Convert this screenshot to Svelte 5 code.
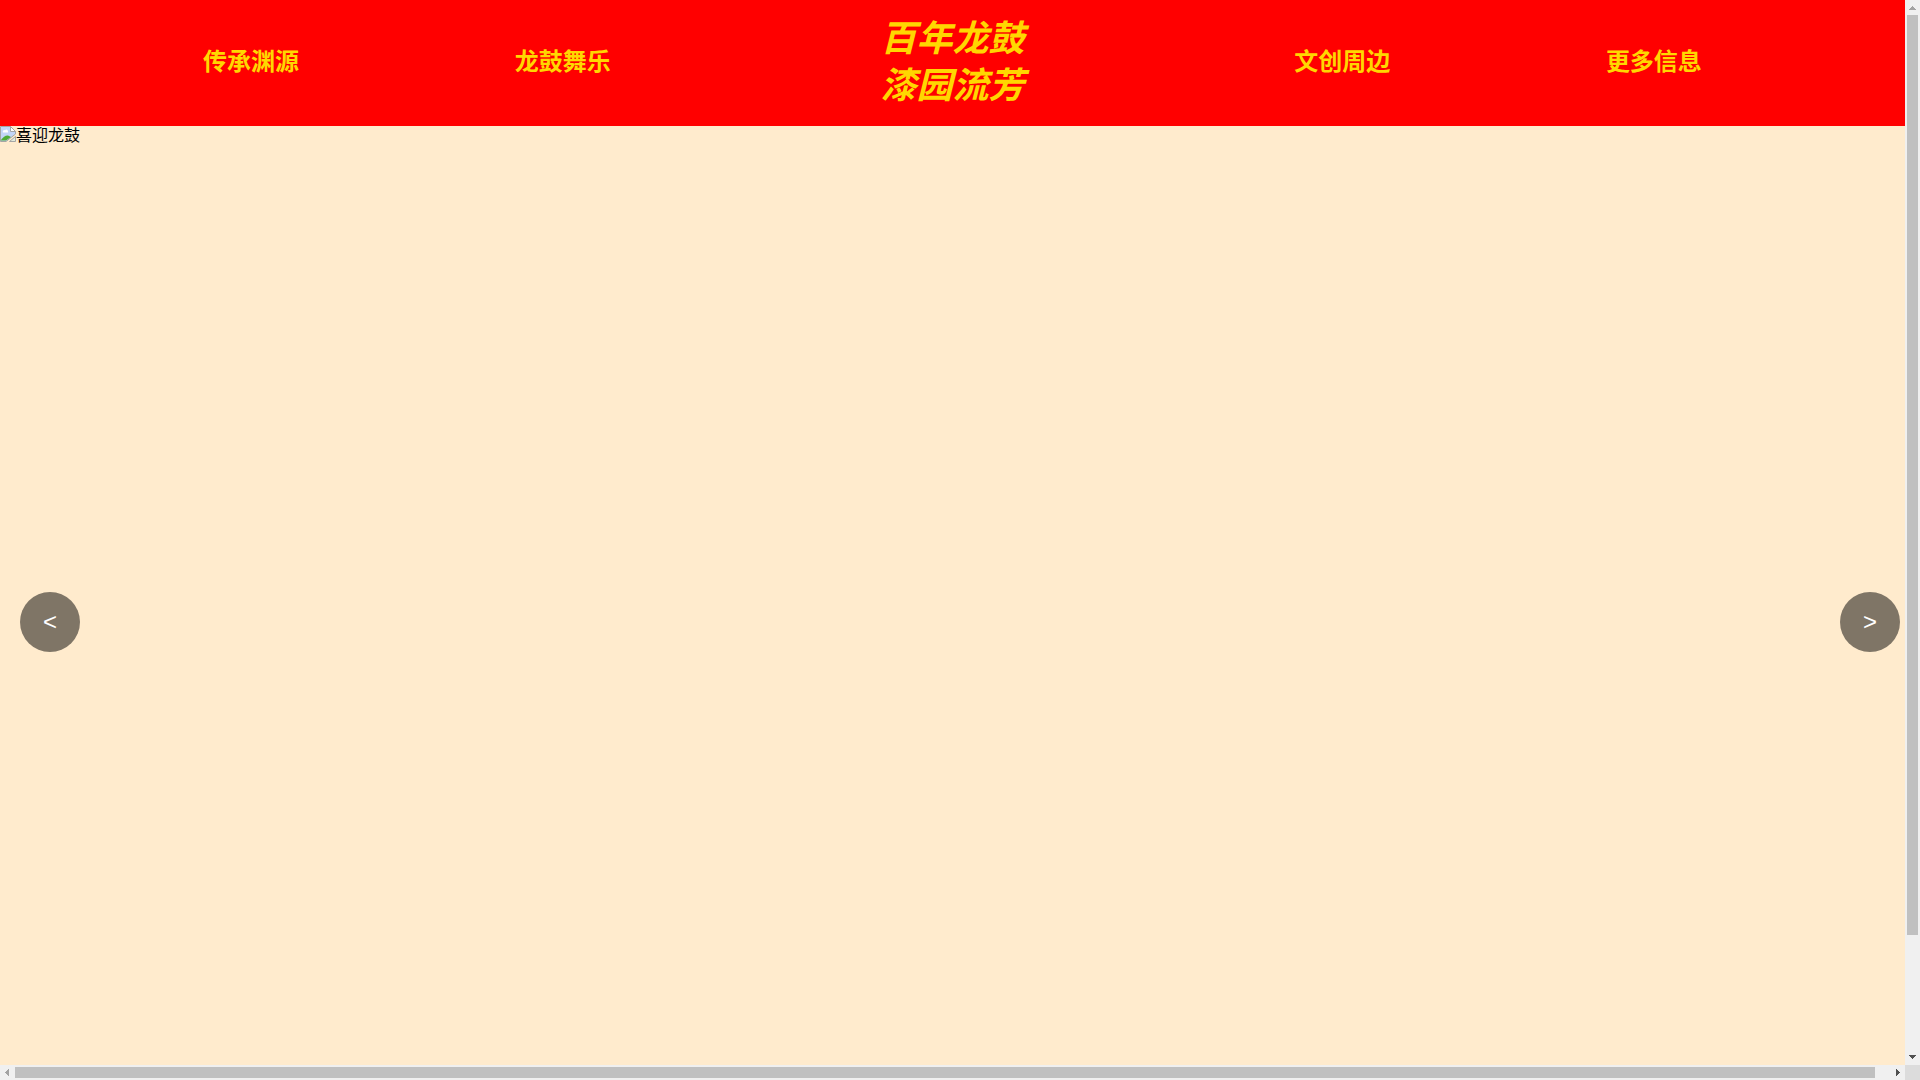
<script>
  const leftLinks = ["传承渊源", "龙鼓舞乐"];
  const rightLinks = ["文创周边", "更多信息"];
  const slides = ["喜迎龙鼓"];

  let current = $state(0);

  function move(step) {
    current = (current + step + slides.length) % slides.length;
  }
</script>

{#snippet links(items)}
  <ul class="links">
    {#each items as item}
      <li><a href="#{item}">{item}</a></li>
    {/each}
  </ul>
{/snippet}

{#snippet arrow(dir, points)}
  <svg class="arrow {dir}" viewBox="0 0 15 15" shape-rendering="crispEdges">
    <polygon {points} />
  </svg>
{/snippet}

<div class="frame">
  <div class="page">
    <nav class="navbar">
      {@render links(leftLinks)}
      <h1 class="logo">百年龙鼓<br />漆园流芳</h1>
      {@render links(rightLinks)}
    </nav>

    <main class="carousel">
      <div class="slide">
        <svg class="broken" viewBox="0 0 16 16" aria-hidden="true">
          <path d="M0.5 0.5H10.5L15.5 5.5V8L6 15.5H0.5Z" fill="#c3d5f7" stroke="#a5a5a5" />
          <path d="M10.5 0.5V5.5H15.5Z" fill="#fff" stroke="#a5a5a5" />
          <path d="M3 6.5C2 4.5 4.5 3.5 5 4.5C6 2.5 8.5 4 8 6.5Z" fill="#fff" />
          <path d="M1 14.5V14C3 11 6 9 8 9.5L11 11L6 14.5Z" fill="#4fac35" />
          <path d="M15.5 10.5V15.5H9.5Z" fill="#e4ecdc" stroke="#a5a5a5" />
        </svg><span>{slides[current]}</span>
      </div>
      <button class="prev" onclick={() => move(-1)}>&lt;</button>
      <button class="next" onclick={() => move(1)}>&gt;</button>
    </main>
  </div>

  <div class="bar vertical">
    {@render arrow("off", "7,6 8,6 11,10 4,10")}
    <div class="track"><div class="thumb"></div></div>
    {@render arrow("on", "4,5 11,5 8,9 7,9")}
  </div>
  <div class="bar horizontal">
    {@render arrow("off", "5,7 9,4 9,11 5,8")}
    <div class="track"><div class="thumb"></div></div>
    {@render arrow("on", "6,4 10,7 10,8 6,11")}
  </div>
  <div class="corner"></div>
</div>

<style>
  :global(body) {
    margin: 0;
    overflow: hidden;
    font-family: "Liberation Sans", "Noto Sans CJK SC", sans-serif;
  }

  .frame {
    display: grid;
    grid-template-columns: minmax(0, 1fr) 15px;
    grid-template-rows: minmax(0, 1fr) 15px;
    height: 100vh;
  }

  .page {
    overflow: hidden;
    background: #ffebcd;
  }

  .navbar {
    display: flex;
    align-items: center;
    padding: 15px 5% 17px;
    background: #ff0000;
  }

  .links {
    display: flex;
    flex: 4;
    justify-content: space-around;
    margin: 0;
    padding: 0;
    list-style: none;
  }

  .links a {
    display: block;
    color: #ffd700;
    font-size: 24px;
    font-weight: bold;
    line-height: 28px;
    text-decoration: none;
  }

  .logo {
    flex: 3;
    margin: 0;
    color: #ffd700;
    font-size: 36px;
    font-style: italic;
    line-height: 47px;
    text-align: center;
  }

  .carousel {
    position: relative;
    width: 100vw;
    height: calc(100vh - 88px);
  }

  .slide {
    display: flex;
    align-items: flex-start;
    font-size: 16px;
    line-height: 20px;
  }

  .broken {
    width: 16px;
    height: 16px;
  }

  .carousel button {
    position: absolute;
    top: 50%;
    width: 60px;
    height: 60px;
    margin-top: -30px;
    padding: 0;
    border: none;
    border-radius: 50%;
    background: rgba(0, 0, 0, 0.5);
    color: #fff;
    font-family: inherit;
    font-size: 24px;
    cursor: pointer;
  }

  .prev {
    left: 20px;
  }

  .next {
    right: 20px;
  }

  .bar {
    display: flex;
    background: #f0f0f0;
  }

  .vertical {
    flex-direction: column;
  }

  .track {
    display: flex;
    flex: 1;
  }

  .thumb {
    background: #c0c0c0;
  }

  .vertical .thumb {
    width: 11px;
    height: 88.9%;
    margin: 0 2px;
  }

  .horizontal .thumb {
    width: 99.2%;
    height: 11px;
    margin: 2px 0;
  }

  .arrow {
    width: 15px;
    height: 15px;
  }

  .off {
    fill: #a3a3a3;
  }

  .on {
    fill: #505050;
  }

  .corner {
    background: #dcdcdc;
  }
</style>
